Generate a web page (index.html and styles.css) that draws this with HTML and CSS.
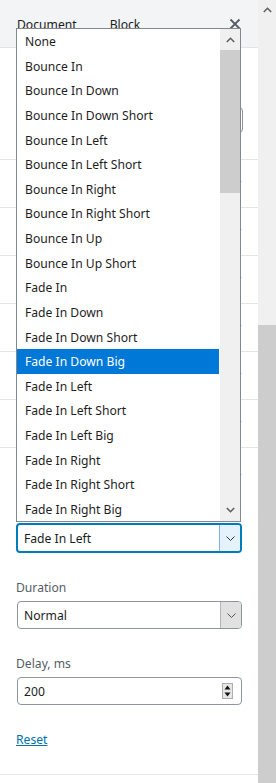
FILE: index.html
```html
<!DOCTYPE html>
<html lang="en">
<head>
    <meta charset="UTF-8">
    <meta name="viewport" content="width=device-width, initial-scale=1.0">
    <title>Block settings</title>
    <link rel="stylesheet" href="styles.css">
</head>
<body>
    <div class="screen">
        <aside class="sidebar">
            <div class="tabs">
                <span class="tab">Document</span>
                <span class="tab">Block</span>
                <span class="close">
                    <svg width="12" height="12" viewBox="0 0 12 12"><path d="M1.5 1.5l9 9M10.5 1.5l-9 9" stroke="#555d66" stroke-width="1.8" fill="none"/></svg>
                </span>
            </div>

            <div class="panel panel-first">
                <div class="ghost-input"></div>
            </div>
            <div class="panel"><svg class="toggle" width="14" height="8" viewBox="0 0 14 8"><path d="M1 1l6 6 6-6" stroke="#555d66" stroke-width="1.5" fill="none"/></svg></div>
            <div class="panel"><svg class="toggle" width="14" height="8" viewBox="0 0 14 8"><path d="M1 1l6 6 6-6" stroke="#555d66" stroke-width="1.5" fill="none"/></svg></div>
            <div class="panel"><svg class="toggle" width="14" height="8" viewBox="0 0 14 8"><path d="M1 1l6 6 6-6" stroke="#555d66" stroke-width="1.5" fill="none"/></svg></div>
            <div class="panel"><svg class="toggle" width="14" height="8" viewBox="0 0 14 8"><path d="M1 1l6 6 6-6" stroke="#555d66" stroke-width="1.5" fill="none"/></svg></div>
            <div class="panel"><svg class="toggle" width="14" height="8" viewBox="0 0 14 8"><path d="M1 1l6 6 6-6" stroke="#555d66" stroke-width="1.5" fill="none"/></svg></div>
            <div class="panel"><svg class="toggle" width="14" height="8" viewBox="0 0 14 8"><path d="M1 1l6 6 6-6" stroke="#555d66" stroke-width="1.5" fill="none"/></svg></div>

            <div class="panel panel-open">
                <div class="panel-title">
                    <svg class="toggle" width="14" height="8" viewBox="0 0 14 8"><path d="M1 7l6-6 6 6" stroke="#555d66" stroke-width="1.5" fill="none"/></svg>
                </div>

                <div class="field field-animation">
                    <div class="select focused">
                        <span class="select-value">Fade In Left</span>
                        <span class="select-arrow">
                            <svg width="9" height="5" viewBox="0 0 9 5"><path d="M0.5 0.5l4 4 4-4" stroke="#333" stroke-width="1" fill="none"/></svg>
                        </span>
                    </div>
                </div>

                <div class="field">
                    <label class="field-label">Duration</label>
                    <div class="select">
                        <span class="select-value">Normal</span>
                        <span class="select-arrow">
                            <svg width="9" height="5" viewBox="0 0 9 5"><path d="M0.5 0.5l4 4 4-4" stroke="#555" stroke-width="1" fill="none"/></svg>
                        </span>
                    </div>
                </div>

                <div class="field">
                    <label class="field-label">Delay, ms</label>
                    <div class="number">
                        <span class="select-value">200</span>
                        <span class="spinner">
                            <svg width="11" height="16" viewBox="0 0 11 16"><rect x="0.5" y="0.5" width="10" height="15" fill="#e6e6e6" stroke="#adadad"/><path d="M2.5 6.5h6l-3-4z" fill="#111"/><path d="M2.5 9.5h6l-3 4z" fill="#111"/></svg>
                        </span>
                    </div>
                </div>

                <a class="reset" href="#">Reset</a>
            </div>

            <div class="listbox">
                <ul class="options">
                    <li>None</li>
                    <li>Bounce In</li>
                    <li>Bounce In Down</li>
                    <li>Bounce In Down Short</li>
                    <li>Bounce In Left</li>
                    <li>Bounce In Left Short</li>
                    <li>Bounce In Right</li>
                    <li>Bounce In Right Short</li>
                    <li>Bounce In Up</li>
                    <li>Bounce In Up Short</li>
                    <li>Fade In</li>
                    <li>Fade In Down</li>
                    <li>Fade In Down Short</li>
                    <li class="hover">Fade In Down Big</li>
                    <li>Fade In Left</li>
                    <li>Fade In Left Short</li>
                    <li>Fade In Left Big</li>
                    <li>Fade In Right</li>
                    <li>Fade In Right Short</li>
                    <li>Fade In Right Big</li>
                </ul>
                <div class="list-scroll">
                    <svg class="arrow" width="9" height="6" viewBox="0 0 9 6"><path d="M0.8 5l3.7-3.7L8.2 5" stroke="#606060" stroke-width="1.6" fill="none"/></svg>
                    <div class="list-thumb"></div>
                    <div class="list-track"></div>
                    <svg class="arrow" width="9" height="6" viewBox="0 0 9 6"><path d="M0.8 1l3.7 3.7L8.2 1" stroke="#606060" stroke-width="1.6" fill="none"/></svg>
                </div>
            </div>
        </aside>

        <div class="page-scroll">
            <svg class="arrow" width="9" height="6" viewBox="0 0 9 6"><path d="M0.8 5l3.7-3.7L8.2 5" stroke="#606060" stroke-width="1.6" fill="none"/></svg>
            <div class="page-track"></div>
            <div class="page-thumb"></div>
        </div>
    </div>
</body>
</html>
```

FILE: styles.css
```css
body {
    margin: 0;
    font-family: "Noto Sans", "Open Sans", sans-serif;
    font-size: 12.15px;
    color: #191e23;
    background: #fff;
}
.screen {
    display: flex;
    width: 276px;
    height: 783px;
    overflow: hidden;
}
.sidebar {
    width: 258px;
    position: relative;
    background: #fff;
}
.tabs {
    height: 48px;
    background: #f3f4f5;
    border-bottom: 1px solid #e2e4e7;
    display: flex;
    align-items: center;
    padding: 2px 0 0 17px;
    box-sizing: border-box;
}
.tab {
    margin-right: 33px;
}
.close {
    margin-left: auto;
    margin-right: 17px;
    margin-top: -2px;
    display: flex;
}
.panel {
    height: 48px;
    border-bottom: 1px solid #e2e4e7;
    box-sizing: border-box;
    position: relative;
    display: flex;
    align-items: center;
    justify-content: flex-end;
    padding-right: 16px;
}
.panel-first {
    height: 112px;
    align-items: flex-start;
    padding: 59px 15px 0 16px;
}
.ghost-input {
    width: 100%;
    height: 26px;
    border: 1px solid #8d96a0;
    border-radius: 4px;
    box-sizing: border-box;
}
.panel-open {
    height: auto;
    display: block;
    padding: 0 16px 25px 16px;
}
.panel-title {
    height: 48px;
    display: flex;
    align-items: center;
    justify-content: flex-end;
}
.field {
    margin-bottom: 26px;
}
.field-animation {
    margin-top: 27px;
}
.field-label {
    display: block;
    color: #555d66;
    margin-bottom: 4px;
    line-height: 18px;
}
.select, .number {
    height: 28px;
    border: 1px solid #8d96a0;
    border-radius: 4px;
    display: flex;
    align-items: center;
    box-sizing: border-box;
    margin-left: 1px;
    overflow: hidden;
}
.select.focused {
    height: 30px;
    margin-left: 0;
    border: 2px solid #007cba;
}
.select-value {
    flex: 1;
    padding-left: 6px;
}
.select-arrow {
    width: 20px;
    align-self: stretch;
    background: #e1e1e1;
    border-left: 1px solid #b5b5b5;
    display: flex;
    align-items: center;
    justify-content: center;
}
.focused .select-arrow {
    background: #e5f1fb;
    border-left-color: #7eb4ea;
}
.spinner {
    display: flex;
    margin-right: 8px;
}
.reset {
    color: #0073aa;
    text-decoration: underline;
    display: inline-block;
    line-height: 18px;
}
.listbox {
    position: absolute;
    left: 16px;
    top: 28px;
    width: 225px;
    height: 494px;
    border: 1px solid #828790;
    box-sizing: border-box;
    background: #fff;
    display: flex;
}
.options {
    list-style: none;
    margin: 0;
    padding: 0;
    flex: 1;
}
.options li {
    height: 24.63px;
    line-height: 26px;
    padding-left: 8px;
    color: #1e1e1e;
    white-space: nowrap;
}
.options li.hover {
    background: #0078d7;
    color: #fff;
    margin-right: 1px;
}
.list-scroll {
    width: 20px;
    background: #f0f0f0;
    display: flex;
    flex-direction: column;
    align-items: center;
}
.list-scroll .arrow {
    margin: 8px 0;
}
.list-thumb {
    width: 100%;
    height: 143px;
    background: #cdcdcd;
    margin-top: -1px;
}
.list-track {
    flex: 1;
}
.page-scroll {
    width: 18px;
    background: #f0f0f0;
    display: flex;
    flex-direction: column;
    align-items: center;
}
.page-scroll .arrow {
    margin-top: 7px;
}
.page-track {
    height: 312px;
}
.page-thumb {
    width: 100%;
    flex: 1;
    background: #cdcdcd;
}
```
